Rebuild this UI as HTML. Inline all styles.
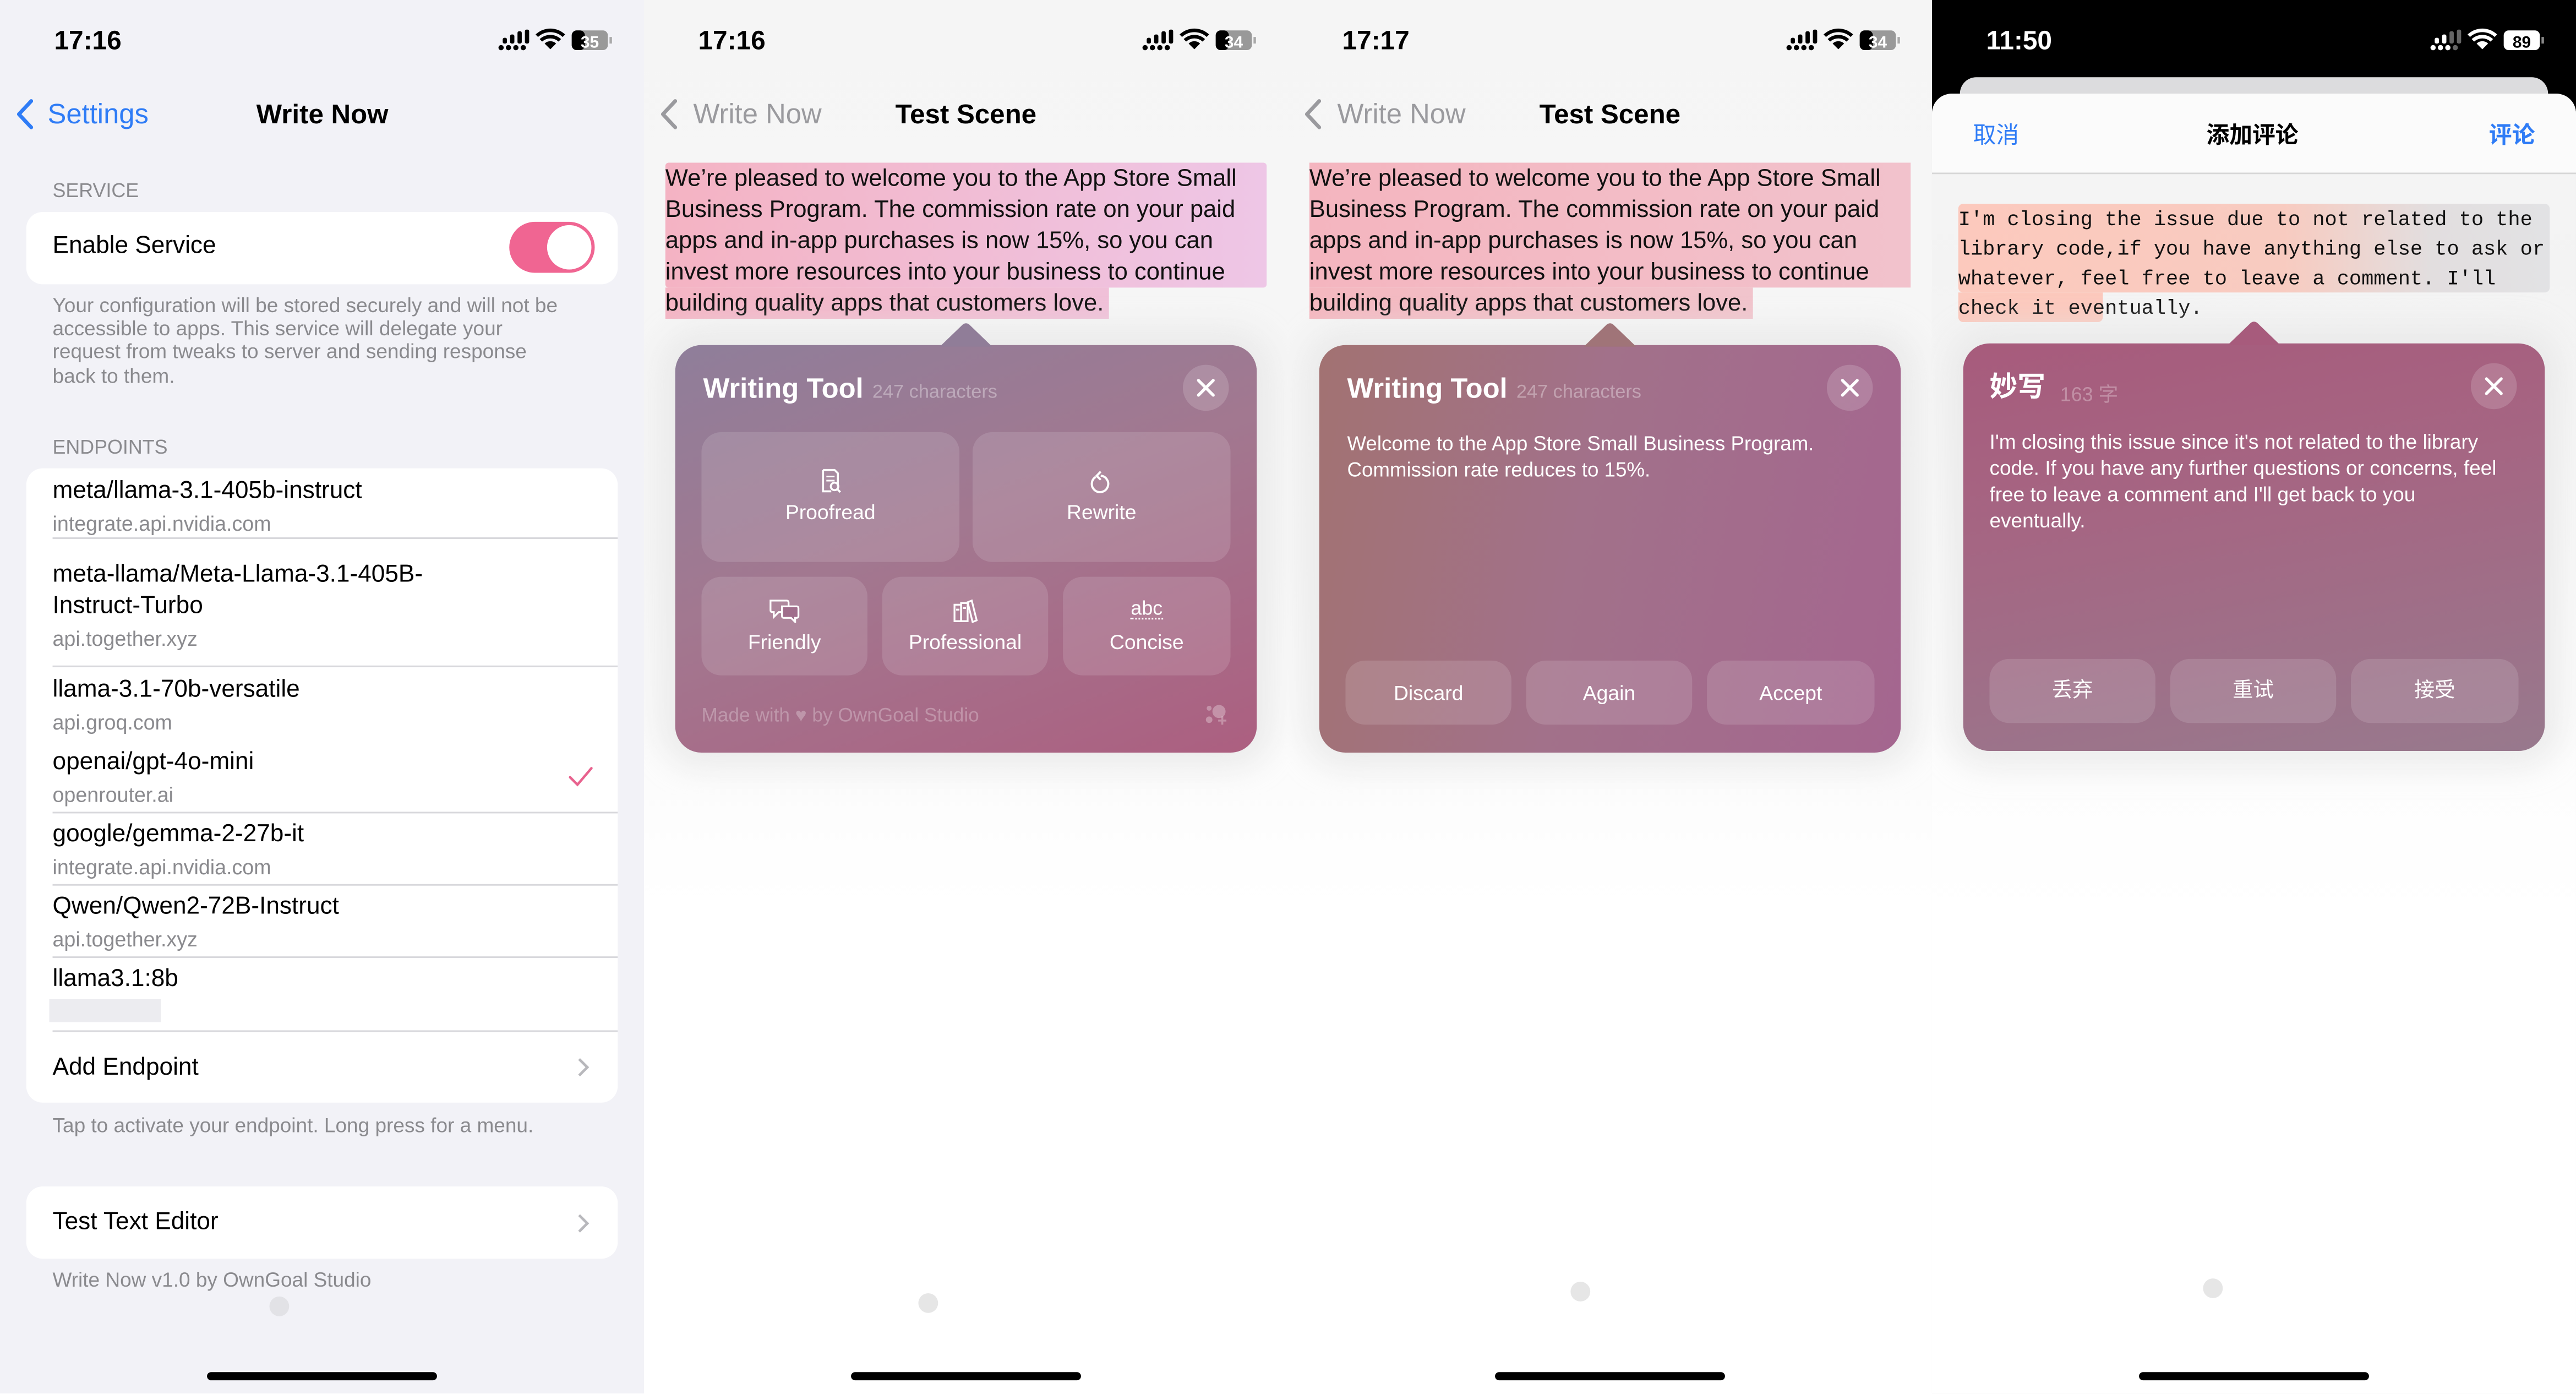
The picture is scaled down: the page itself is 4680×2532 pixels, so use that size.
<!DOCTYPE html>
<html><head><meta charset="utf-8">
<style>
*{margin:0;padding:0;box-sizing:border-box}
html,body{width:4680px;height:2532px;overflow:hidden;background:#fff}
#s{position:absolute;left:0;top:0;width:1568px;height:848px;transform:scale(2.98469);transform-origin:0 0;font-family:"Liberation Sans","Noto Sans CJK SC",sans-serif;}
.a{position:absolute;white-space:nowrap}
.p{position:absolute;top:0;height:848px;width:392px;overflow:hidden}
.t{font-size:16.5px;font-weight:bold;line-height:20px}
.card{position:absolute;background:#fff;border-radius:10px}
.hr{position:absolute;height:1px;background:#d8d8dc}
.g{color:#8a8a8e}
.home{position:absolute;top:835px;width:140px;height:5px;border-radius:3px;background:#000}
.dot{position:absolute;width:12px;height:12px;border-radius:50%;background:#e6e6e6}
.wt{position:absolute;border-radius:16px;box-shadow:0 0 18px 10px rgba(230,230,230,.7)}
.btn{position:absolute;background:rgba(255,255,255,.13);border-radius:12px;color:#fff;font-size:12.5px;text-align:center}
.cl{position:absolute;width:28px;height:28px;border-radius:50%;background:rgba(255,255,255,.16)}
.hl{position:absolute;height:19px}
.nm{font-size:14.8px}
.sb{font-size:12.6px}
</style></head><body><div id="s">

<!-- PANEL 1 -->
<div class="p" style="left:0;background:#f2f2f7">
 <div class="a t" style="left:33px;top:16px;font-size:16px">17:16</div>
 <svg class="a" style="left:303px;top:17px" width="72" height="16" viewBox="0 0 72 16">
  <g fill="#000"><circle cx="2" cy="12" r="1.6"/><circle cx="6.5" cy="12" r="1.6"/><circle cx="11" cy="12" r="1.6"/><circle cx="15.5" cy="12" r="1.6"/><rect x="3" y="6" width="2.6" height="3.5" rx="1"/><rect x="7.5" y="4" width="2.6" height="5.5" rx="1"/><rect x="12" y="2" width="2.6" height="7.5" rx="1"/><rect x="16.5" y="1" width="2.6" height="8.5" rx="1"/>
  <path d="M32 13 L28.5 9.5 A5 5 0 0 1 35.5 9.5 Z"/><path d="M25.5 6.8 A9.5 9.5 0 0 1 38.5 6.8 L37 8.3 A7.5 7.5 0 0 0 27 8.3Z"/><path d="M23 4 A13 13 0 0 1 41 4 L39.5 5.5 A11 11 0 0 0 24.5 5.5Z"/>
  <rect x="45" y="1.5" width="22" height="12" rx="3" fill="#999"/><rect x="45" y="1.5" width="8" height="12" rx="3"/><rect x="68" y="5.5" width="1.5" height="4" fill="#aaa"/></g>
  <text x="56" y="12" font-size="10" font-weight="bold" fill="#fff" text-anchor="middle" font-family="Liberation Sans">35</text>
 </svg>
 <svg class="a" style="left:9px;top:60px" width="12" height="19"><path d="M10 1.5 L2.5 9.5 L10 17.5" fill="none" stroke="#2f7cf6" stroke-width="2.3" stroke-linecap="round" stroke-linejoin="round"/></svg>
 <div class="a" style="left:29px;top:59px;font-size:17px;line-height:22px;color:#2f7cf6">Settings</div>
 <div class="a t" style="left:156px;top:60px">Write Now</div>
 <div class="a g" style="left:32px;top:109px;font-size:12px">SERVICE</div>
 <div class="card" style="left:16px;top:129px;width:360px;height:44px"></div>
 <div class="a" style="left:32px;top:142px;font-size:14.8px">Enable Service</div>
 <div class="a" style="left:310px;top:135px;width:52px;height:31px;border-radius:16px;background:#f06592"></div>
 <div class="a" style="left:333px;top:137px;width:27px;height:27px;border-radius:50%;background:#fff"></div>
 <div class="a g" style="left:32px;top:179px;font-size:12.4px;line-height:14.2px;white-space:normal;width:312px">Your configuration will be stored securely and will not be accessible to apps. This service will delegate your request from tweaks to server and sending response back to them.</div>
 <div class="a g" style="left:32px;top:265px;font-size:12px">ENDPOINTS</div>
 <div class="card" style="left:16px;top:285px;width:360px;height:386px"></div>
 <div style="line-height:18px">
 <div class="a nm" style="left:32px;top:290px">meta/llama-3.1-405b-instruct</div>
 <div class="a g sb" style="left:32px;top:310px">integrate.api.nvidia.com</div>
 <div class="hr" style="left:32px;top:327px;width:344px"></div>
 <div class="a nm" style="left:32px;top:341px">meta-llama/Meta-Llama-3.1-405B-</div>
 <div class="a nm" style="left:32px;top:360px">Instruct-Turbo</div>
 <div class="a g sb" style="left:32px;top:380px">api.together.xyz</div>
 <div class="hr" style="left:32px;top:405px;width:344px"></div>
 <div class="a nm" style="left:32px;top:411px">llama-3.1-70b-versatile</div>
 <div class="a g sb" style="left:32px;top:431px">api.groq.com</div>
 <div class="a nm" style="left:32px;top:455px">openai/gpt-4o-mini</div>
 <div class="a g sb" style="left:32px;top:475px">openrouter.ai</div>
 <svg class="a" style="left:346px;top:466px" width="15" height="13"><path d="M1 7 L5.5 11.5 L14 1.5" fill="none" stroke="#e8628e" stroke-width="1.5" stroke-linecap="round"/></svg>
 <div class="hr" style="left:32px;top:494px;width:344px"></div>
 <div class="a nm" style="left:32px;top:499px">google/gemma-2-27b-it</div>
 <div class="a g sb" style="left:32px;top:519px">integrate.api.nvidia.com</div>
 <div class="hr" style="left:32px;top:538px;width:344px"></div>
 <div class="a nm" style="left:32px;top:543px">Qwen/Qwen2-72B-Instruct</div>
 <div class="a g sb" style="left:32px;top:563px">api.together.xyz</div>
 <div class="hr" style="left:32px;top:582px;width:344px"></div>
 <div class="a nm" style="left:32px;top:587px">llama3.1:8b</div>
 <div class="a" style="left:30px;top:608px;width:68px;height:14px;background:#ececf0"></div>
 <div class="hr" style="left:32px;top:627px;width:344px"></div>
 <div class="a nm" style="left:32px;top:641px">Add Endpoint</div>
 </div>
 <svg class="a" style="left:351px;top:643px" width="8" height="13"><path d="M1.5 1.5 L6.5 6.5 L1.5 11.5" fill="none" stroke="#b8b8bc" stroke-width="1.6"/></svg>
 <div class="a g" style="left:32px;top:678px;font-size:12.4px">Tap to activate your endpoint. Long press for a menu.</div>
 <div class="card" style="left:16px;top:722px;width:360px;height:44px"></div>
 <div class="a nm" style="left:32px;top:736px">Test Text Editor</div>
 <svg class="a" style="left:351px;top:738px" width="8" height="13"><path d="M1.5 1.5 L6.5 6.5 L1.5 11.5" fill="none" stroke="#b8b8bc" stroke-width="1.6"/></svg>
 <div class="a g" style="left:32px;top:772px;font-size:12.4px">Write Now v1.0 by OwnGoal Studio</div>
 <div class="dot" style="left:164px;top:789px;background:#e2e2e6"></div>
 <div class="home" style="left:126px"></div>
</div>

<!-- PANEL 2 -->
<div class="p" style="left:392px;background:linear-gradient(#f5f5f5,#f7f7f7 40%,#fff 65%)">
 <div class="a t" style="left:33px;top:16px;font-size:16px">17:16</div>
 <svg class="a" style="left:303px;top:17px" width="72" height="16" viewBox="0 0 72 16">
  <g fill="#000"><circle cx="2" cy="12" r="1.6"/><circle cx="6.5" cy="12" r="1.6"/><circle cx="11" cy="12" r="1.6"/><circle cx="15.5" cy="12" r="1.6"/><rect x="3" y="6" width="2.6" height="3.5" rx="1"/><rect x="7.5" y="4" width="2.6" height="5.5" rx="1"/><rect x="12" y="2" width="2.6" height="7.5" rx="1"/><rect x="16.5" y="1" width="2.6" height="8.5" rx="1"/>
  <path d="M32 13 L28.5 9.5 A5 5 0 0 1 35.5 9.5 Z"/><path d="M25.5 6.8 A9.5 9.5 0 0 1 38.5 6.8 L37 8.3 A7.5 7.5 0 0 0 27 8.3Z"/><path d="M23 4 A13 13 0 0 1 41 4 L39.5 5.5 A11 11 0 0 0 24.5 5.5Z"/>
  <rect x="45" y="1.5" width="22" height="12" rx="3" fill="#999"/><rect x="45" y="1.5" width="8" height="12" rx="3"/><rect x="68" y="5.5" width="1.5" height="4" fill="#aaa"/></g>
  <text x="56" y="12" font-size="10" font-weight="bold" fill="#fff" text-anchor="middle" font-family="Liberation Sans">34</text>
 </svg>
 <svg class="a" style="left:9px;top:60px" width="12" height="19"><path d="M10 1.5 L2.5 9.5 L10 17.5" fill="none" stroke="#9a9a9e" stroke-width="2.3" stroke-linecap="round" stroke-linejoin="round"/></svg>
 <div class="a" style="left:30px;top:59px;font-size:17px;line-height:22px;color:#9a9a9e">Write Now</div>
 <div class="a t" style="left:153px;top:60px">Test Scene</div>
 <div class="hl" style="left:13px;top:99px;width:366px;height:76px;background:linear-gradient(90deg,#f4b3c3,#eec6e6);border-radius:2px"></div>
 <div class="hl" style="left:13px;top:175px;width:270px;background:linear-gradient(90deg,#f4b5c4,#f0c0d8)"></div>
 <div class="a" style="left:13px;top:100px;font-size:14.6px;line-height:19px;color:#111">We’re pleased to welcome you to the App Store Small<br>Business Program. The commission rate on your paid<br>apps and in-app purchases is now 15%, so you can<br>invest more resources into your business to continue<br>building quality apps that customers love.</div>
 <div class="wt" style="left:19px;top:210px;width:354px;height:248px;background:linear-gradient(160deg,#8f7e9a 0%,#a27890 45%,#ac5f80 100%)"></div>
 <svg class="a" style="left:180px;top:196px" width="32" height="15"><path d="M0 15 L14 1.5 Q16 0 18 1.5 L32 15Z" fill="#907d98"/></svg>
 <div class="a" style="left:36px;top:227px;font-size:17px;font-weight:bold;color:#fff;line-height:20px">Writing Tool</div>
 <div class="a" style="left:139px;top:233px;font-size:11.5px;color:rgba(255,255,255,.35)">247 characters</div>
 <div class="cl" style="left:328px;top:222px"></div>
 <svg class="a" style="left:336px;top:230px" width="12" height="12"><path d="M1.5 1.5L10.5 10.5M10.5 1.5L1.5 10.5" stroke="#fff" stroke-width="1.8" stroke-linecap="round"/></svg>
 <div class="btn" style="left:35px;top:263px;width:157px;height:79px"><svg style="position:absolute;left:72px;top:22px" width="14" height="16"><path d="M2 1h7l2 2v8M2 1v13h5" fill="none" stroke="#fff" stroke-width="1.2"/><path d="M4 5h5M4 7.5h5" stroke="#fff" stroke-width="1"/><circle cx="9" cy="11" r="2.3" fill="none" stroke="#fff" stroke-width="1.2"/><path d="M10.7 12.7L12.5 14.5" stroke="#fff" stroke-width="1.2"/></svg><div style="position:absolute;width:100%;top:42px">Proofread</div></div>
 <div class="btn" style="left:200px;top:263px;width:157px;height:79px"><svg style="position:absolute;left:71px;top:23px" width="14" height="15"><path d="M4 4.2 A5 5 0 1 0 7 3.5" fill="none" stroke="#fff" stroke-width="1.3"/><path d="M7 1 L4.5 3.6 L7 6" fill="none" stroke="#fff" stroke-width="1.3"/></svg><div style="position:absolute;width:100%;top:42px">Rewrite</div></div>
 <div class="btn" style="left:35px;top:351px;width:101px;height:60px"><svg style="position:absolute;left:41px;top:13px" width="20" height="15"><path d="M1 1.5h10a1 1 0 0 1 1 1v5a1 1 0 0 1-1 1H6l-3 3v-3H2a1 1 0 0 1-1-1z" fill="none" stroke="#fff" stroke-width="1.1"/><path d="M8 5h9a1 1 0 0 1 1 1v5a1 1 0 0 1-1 1h-1v2.5l-2.5-2.5H9a1 1 0 0 1-1-1z" fill="rgba(160,110,140,1)" stroke="#fff" stroke-width="1.1"/></svg><div style="position:absolute;width:100%;top:33px">Friendly</div></div>
 <div class="btn" style="left:145px;top:351px;width:101px;height:60px"><svg style="position:absolute;left:43px;top:13px" width="16" height="15"><g fill="none" stroke="#fff" stroke-width="1.1"><rect x="1" y="4" width="4" height="10"/><rect x="5" y="3" width="4" height="11"/><path d="M9 2.5l2.5-1 3 12-2.5 1z"/><path d="M2 7h2M6 6h2"/></g></svg><div style="position:absolute;width:100%;top:33px">Professional</div></div>
 <div class="btn" style="left:255px;top:351px;width:102px;height:60px"><div style="position:absolute;width:100%;top:13px;font-size:12px;line-height:13px">abc</div><div style="position:absolute;left:41px;top:25px;width:20px;border-top:1.3px dotted #fff"></div><div style="position:absolute;width:100%;top:33px">Concise</div></div>
 <div class="a" style="left:35px;top:428px;font-size:11.8px;color:rgba(255,255,255,.28)">Made with ♥ by OwnGoal Studio</div>
 <svg class="a" style="left:340px;top:427px" width="16" height="15"><g fill="rgba(255,255,255,.3)"><circle cx="10" cy="6" r="4"/><circle cx="4" cy="4" r="1.5"/><circle cx="4" cy="11" r="2"/><path d="M12 9v5M9.5 11.5h5" stroke="rgba(255,255,255,.3)" stroke-width="1.2"/></g></svg>
 <div class="dot" style="left:167px;top:787px"></div>
 <div class="home" style="left:126px"></div>
</div>

<!-- PANEL 3 -->
<div class="p" style="left:784px;background:linear-gradient(#f5f5f5,#f7f7f7 40%,#fff 65%)">
 <div class="a t" style="left:33px;top:16px;font-size:16px">17:17</div>
 <svg class="a" style="left:303px;top:17px" width="72" height="16" viewBox="0 0 72 16">
  <g fill="#000"><circle cx="2" cy="12" r="1.6"/><circle cx="6.5" cy="12" r="1.6"/><circle cx="11" cy="12" r="1.6"/><circle cx="15.5" cy="12" r="1.6"/><rect x="3" y="6" width="2.6" height="3.5" rx="1"/><rect x="7.5" y="4" width="2.6" height="5.5" rx="1"/><rect x="12" y="2" width="2.6" height="7.5" rx="1"/><rect x="16.5" y="1" width="2.6" height="8.5" rx="1"/>
  <path d="M32 13 L28.5 9.5 A5 5 0 0 1 35.5 9.5 Z"/><path d="M25.5 6.8 A9.5 9.5 0 0 1 38.5 6.8 L37 8.3 A7.5 7.5 0 0 0 27 8.3Z"/><path d="M23 4 A13 13 0 0 1 41 4 L39.5 5.5 A11 11 0 0 0 24.5 5.5Z"/>
  <rect x="45" y="1.5" width="22" height="12" rx="3" fill="#999"/><rect x="45" y="1.5" width="8" height="12" rx="3"/><rect x="68" y="5.5" width="1.5" height="4" fill="#aaa"/></g>
  <text x="56" y="12" font-size="10" font-weight="bold" fill="#fff" text-anchor="middle" font-family="Liberation Sans">34</text>
 </svg>
 <svg class="a" style="left:9px;top:60px" width="12" height="19"><path d="M10 1.5 L2.5 9.5 L10 17.5" fill="none" stroke="#9a9a9e" stroke-width="2.3" stroke-linecap="round" stroke-linejoin="round"/></svg>
 <div class="a" style="left:30px;top:59px;font-size:17px;line-height:22px;color:#9a9a9e">Write Now</div>
 <div class="a t" style="left:153px;top:60px">Test Scene</div>
 <div class="hl" style="left:13px;top:99px;width:366px;height:76px;background:linear-gradient(90deg,#f4b5bf,#f2c2cc)"></div>
 <div class="hl" style="left:13px;top:175px;width:270px;background:linear-gradient(90deg,#f4b8c0,#f1c4cc)"></div>
 <div class="a" style="left:13px;top:100px;font-size:14.6px;line-height:19px;color:#111">We’re pleased to welcome you to the App Store Small<br>Business Program. The commission rate on your paid<br>apps and in-app purchases is now 15%, so you can<br>invest more resources into your business to continue<br>building quality apps that customers love.</div>
 <div class="wt" style="left:19px;top:210px;width:354px;height:248px;background:linear-gradient(100deg,#a27272 0%,#a2718a 45%,#a4668f 100%)"></div>
 <svg class="a" style="left:180px;top:196px" width="32" height="15"><path d="M0 15 L14 1.5 Q16 0 18 1.5 L32 15Z" fill="#a07478"/></svg>
 <div class="a" style="left:36px;top:227px;font-size:17px;font-weight:bold;color:#fff;line-height:20px">Writing Tool</div>
 <div class="a" style="left:139px;top:233px;font-size:11.5px;color:rgba(255,255,255,.35)">247 characters</div>
 <div class="cl" style="left:328px;top:222px"></div>
 <svg class="a" style="left:336px;top:230px" width="12" height="12"><path d="M1.5 1.5L10.5 10.5M10.5 1.5L1.5 10.5" stroke="#fff" stroke-width="1.8" stroke-linecap="round"/></svg>
 <div class="a" style="left:36px;top:262px;font-size:12.3px;line-height:16px;color:#fff">Welcome to the App Store Small Business Program.<br>Commission rate reduces to 15%.</div>
 <div class="btn" style="left:35px;top:402px;width:101px;height:39px;line-height:40px">Discard</div>
 <div class="btn" style="left:145px;top:402px;width:101px;height:39px;line-height:40px">Again</div>
 <div class="btn" style="left:255px;top:402px;width:102px;height:39px;line-height:40px">Accept</div>
 <div class="dot" style="left:172px;top:780px"></div>
 <div class="home" style="left:126px"></div>
</div>

<!-- PANEL 4 -->
<div class="p" style="left:1176px;background:#000">
 <div class="a t" style="left:33px;top:16px;font-size:16px;color:#fff">11:50</div>
 <svg class="a" style="left:303px;top:17px" width="72" height="16" viewBox="0 0 72 16">
  <g fill="#fff"><circle cx="2" cy="12" r="1.6"/><circle cx="6.5" cy="12" r="1.6"/><circle cx="11" cy="12" r="1.6"/><circle cx="15.5" cy="12" r="1.6" fill="#666"/><rect x="3" y="6" width="2.6" height="3.5" rx="1"/><rect x="7.5" y="4" width="2.6" height="5.5" rx="1"/><rect x="12" y="2" width="2.6" height="7.5" rx="1" fill="#666"/><rect x="16.5" y="1" width="2.6" height="8.5" rx="1" fill="#666"/>
  <path d="M32 13 L28.5 9.5 A5 5 0 0 1 35.5 9.5 Z"/><path d="M25.5 6.8 A9.5 9.5 0 0 1 38.5 6.8 L37 8.3 A7.5 7.5 0 0 0 27 8.3Z"/><path d="M23 4 A13 13 0 0 1 41 4 L39.5 5.5 A11 11 0 0 0 24.5 5.5Z"/>
  <rect x="45" y="1.5" width="22" height="12" rx="3"/><rect x="68" y="5.5" width="1.5" height="4" fill="#888"/></g>
  <text x="56" y="12" font-size="10" font-weight="bold" fill="#000" text-anchor="middle" font-family="Liberation Sans">89</text>
 </svg>
 <div class="a" style="left:17px;top:47px;width:358px;height:30px;border-radius:10px 10px 0 0;background:#dcdcde"></div>
 <div class="a" style="left:0;top:57px;width:392px;height:800px;border-radius:12px 12px 0 0;background:linear-gradient(#f5f5f5 0,#f3f3f3 110px,#fafafa 300px,#fff 500px)"></div>
 <div class="a" style="left:0;top:57px;width:392px;height:49px;border-radius:12px 12px 0 0;background:#fbfbfb;border-bottom:1px solid #d6d6d6"></div>
 <div class="a" style="left:25px;top:73px;font-size:14px;color:#2f7cf6;line-height:18px">取消</div>
 <div class="a" style="left:167px;top:73px;font-size:14px;font-weight:bold;line-height:18px">添加评论</div>
 <div class="a" style="left:339px;top:73px;font-size:14px;font-weight:bold;color:#2f7cf6;line-height:18px">评论</div>
 <div class="hl" style="left:16px;top:124px;width:360px;height:54px;background:linear-gradient(90deg,#fcc9bd 0%,#f8cbc0 55%,#e2dedf 80%,#e2e2e4 100%);border-radius:3px"></div>
 <div class="hl" style="left:16px;top:178px;width:88px;height:18px;background:#fcc9bd;border-radius:0 0 3px 3px"></div>
 <div class="a" style="left:16px;top:125px;font-family:'Liberation Mono',monospace;font-size:12.4px;line-height:18px;color:#111">I'm closing the issue due to not related to the<br>library code,if you have anything else to ask or<br>whatever, feel free to leave a comment. I'll<br>check it eventually.</div>
 <div class="wt" style="left:19px;top:209px;width:354px;height:248px;background:linear-gradient(170deg,#a75b7c 0%,#a56683 40%,#98798d 100%)"></div>
 <svg class="a" style="left:180px;top:195px" width="32" height="15"><path d="M0 15 L14 1.5 Q16 0 18 1.5 L32 15Z" fill="#a75b7c"/></svg>
 <div class="a" style="left:35px;top:226px;font-size:17px;font-weight:bold;color:#fff;line-height:20px">妙写</div>
 <div class="a" style="left:78px;top:231px;font-size:12px;color:rgba(255,255,255,.3)">163 字</div>
 <div class="cl" style="left:328px;top:221px"></div>
 <svg class="a" style="left:336px;top:229px" width="12" height="12"><path d="M1.5 1.5L10.5 10.5M10.5 1.5L1.5 10.5" stroke="#fff" stroke-width="1.8" stroke-linecap="round"/></svg>
 <div class="a" style="left:35px;top:261px;font-size:12.4px;line-height:16px;color:#fff">I'm closing this issue since it's not related to the library<br>code. If you have any further questions or concerns, feel<br>free to leave a comment and I'll get back to you<br>eventually.</div>
 <div class="btn" style="left:35px;top:401px;width:101px;height:39px;line-height:39px">丢弃</div>
 <div class="btn" style="left:145px;top:401px;width:101px;height:39px;line-height:39px">重试</div>
 <div class="btn" style="left:255px;top:401px;width:102px;height:39px;line-height:39px">接受</div>
 <div class="dot" style="left:165px;top:778px"></div>
 <div class="home" style="left:126px"></div>
</div>

</div></body></html>
